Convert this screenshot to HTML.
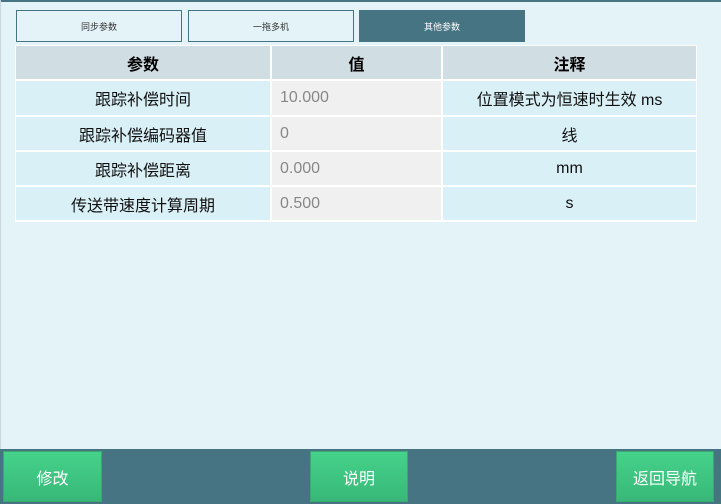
<!DOCTYPE html><html><head><meta charset="utf-8"><style>
*{margin:0;padding:0;box-sizing:border-box}
body{width:721px;height:504px;background:#e4f3f8;position:relative;overflow:hidden;font-family:"Liberation Sans","Noto Sans CJK SC",sans-serif}
.a{position:absolute;display:flex;align-items:center;justify-content:center}
.tab{top:10px;height:32px;border:1px solid #467482;font-size:9px;color:#333}
.h{background:#d0dde2;font-weight:bold;font-size:16px;color:#000}
.c1,.c3{background:#d8f0f6;font-size:16px;color:#111}
.c2{background:#f0f0f0;font-size:16px;color:#888;justify-content:flex-start;padding-left:8px}
.btn{top:451px;height:51px;background:linear-gradient(#45d28a,#38b878);border:1px solid #3aa870;color:#fff;font-size:16px}
</style></head><body>
<div style="position:absolute;left:0;top:0;width:721px;height:2px;background:#467482"></div>
<div style="position:absolute;left:0;top:0;width:1px;height:504px;background:#c8d8de"></div>
<div class="a tab" style="left:16px;width:166px">同步参数</div>
<div class="a tab" style="left:188px;width:166px">一拖多机</div>
<div class="a tab" style="left:359px;width:166px;background:#467482;color:#fff;border:none">其他参数</div>
<div style="position:absolute;left:15px;top:45px;width:682px;height:177px;background:#fff"></div>
<div class="a h" style="left:16px;top:46px;width:254px;height:33px">参数</div>
<div class="a h" style="left:272px;top:46px;width:169px;height:33px">值</div>
<div class="a h" style="left:443px;top:46px;width:253px;height:33px">注释</div>

<div class="a c1" style="left:16px;top:81px;width:254px;height:34px">跟踪补偿时间</div>
<div class="a c2" style="left:272px;top:81px;width:169px;height:34px">10.000</div>
<div class="a c3" style="left:443px;top:81px;width:253px;height:34px">位置模式为恒速时生效 ms</div>

<div class="a c1" style="left:16px;top:117px;width:254px;height:33px">跟踪补偿编码器值</div>
<div class="a c2" style="left:272px;top:117px;width:169px;height:33px">0</div>
<div class="a c3" style="left:443px;top:117px;width:253px;height:33px">线</div>

<div class="a c1" style="left:16px;top:152px;width:254px;height:33px">跟踪补偿距离</div>
<div class="a c2" style="left:272px;top:152px;width:169px;height:33px">0.000</div>
<div class="a c3" style="left:443px;top:152px;width:253px;height:33px">mm</div>

<div class="a c1" style="left:16px;top:187px;width:254px;height:33px">传送带速度计算周期</div>
<div class="a c2" style="left:272px;top:187px;width:169px;height:33px">0.500</div>
<div class="a c3" style="left:443px;top:187px;width:253px;height:33px">s</div>

<div style="position:absolute;left:0;top:449px;width:721px;height:55px;background:#467482"></div>
<div class="a btn" style="left:3px;width:99px">修改</div>
<div class="a btn" style="left:310px;width:98px">说明</div>
<div class="a btn" style="left:616px;width:98px">返回导航</div>
</body></html>
